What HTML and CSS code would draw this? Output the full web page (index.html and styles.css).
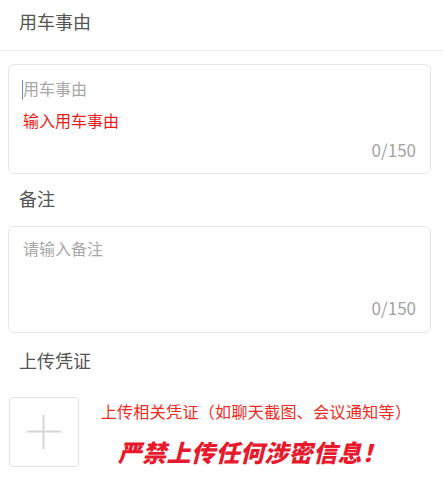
FILE: index.html
```html
<!DOCTYPE html>
<html lang="zh-CN">
<head>
    <meta charset="UTF-8">
    <meta name="viewport" content="width=device-width, initial-scale=1.0">
    <title>用车事由</title>
    <link rel="stylesheet" href="styles.css">
</head>
<body>
    <!-- Cabeçalho -->
    <div class="topbar">用车事由</div>

    <div class="form">
        <!-- Campo: motivo -->
        <div class="field field-reason">
            <div class="placeholder"><span class="caret"></span>用车事由</div>
            <div class="error-msg">输入用车事由</div>
            <div class="count">0/150</div>
        </div>

        <div class="label">备注</div>

        <!-- Campo: observação -->
        <div class="field field-note">
            <div class="placeholder">请输入备注</div>
            <div class="spacer"></div>
            <div class="count">0/150</div>
        </div>

        <div class="label">上传凭证</div>

        <!-- Upload -->
        <div class="upload-row">
            <div class="upload-box">
                <svg width="36" height="36" viewBox="0 0 36 36">
                    <line x1="1" y1="17.5" x2="35" y2="17.5" stroke="#d6d6d6" stroke-width="2"/>
                    <line x1="17.5" y1="1" x2="17.5" y2="35" stroke="#d6d6d6" stroke-width="2"/>
                </svg>
            </div>
            <div class="upload-tips">
                <div class="tip">上传相关凭证（如聊天截图、会议通知等）</div>
                <div class="warning">严禁上传任何涉密信息！</div>
            </div>
        </div>
    </div>
</body>
</html>
```

FILE: styles.css
```css
/* Estilo geral */
body {
    font-family: "Noto Sans CJK SC", "Noto Sans", sans-serif;
    margin: 0;
    padding: 0;
    background-color: #fff;
    color: #555;
}

.topbar {
    padding: 9px 19px 17px;
    font-size: 18px;
    line-height: 24px;
    border-bottom: 1px solid #ededed;
}

.form {
    padding: 0 12px 0 8px;
}

/* Campos de texto */
.field {
    display: flex;
    flex-direction: column;
    border: 1px solid #e6e6e6;
    border-radius: 6px;
    padding: 12px 14px 12px;
}

.field-reason {
    margin-top: 13px;
}

.field-note {
    padding-top: 10px;
    padding-bottom: 13px;
}

.placeholder {
    font-size: 16px;
    line-height: 22px;
    color: #a8a8a8;
}

.caret {
    display: inline-block;
    width: 1px;
    height: 20px;
    margin-left: -1px;
    background-color: #5b9bd5;
    vertical-align: middle;
    position: relative;
    top: -1px;
}

.error-msg {
    margin-top: 8px;
    font-size: 16px;
    line-height: 22px;
    color: #f01a1a;
}

.spacer {
    height: 38px;
}

.count {
    margin-top: 8px;
    font-size: 17px;
    line-height: 22px;
    color: #a3a3a3;
    text-align: right;
}

.field-note .count {
    margin-top: 0;
}

.label {
    margin: 12px 0 16px 11px;
    font-size: 18px;
    line-height: 24px;
}

.field-note + .label {
    margin-top: 15px;
    margin-bottom: 25px;
}

/* Upload */
.upload-row {
    display: flex;
    padding: 0 0 0 1px;
}

.upload-box {
    flex: 0 0 auto;
    width: 68px;
    height: 68px;
    border: 1px solid #e3e3e3;
    border-radius: 3px;
    display: flex;
    justify-content: center;
    align-items: center;
}

.upload-tips {
    flex: 1;
    text-align: center;
    padding-top: 3px;
}

.tip {
    padding-left: 2px;
    font-size: 16px;
    line-height: 22px;
    letter-spacing: 0.35px;
    color: #f22a22;
}

.warning {
    margin-top: 15px;
    margin-right: 6px;
    font-size: 24px;
    line-height: 30px;
    letter-spacing: 0.4px;
    font-weight: 900;
    font-style: italic;
    color: #e8192c;
}
```
